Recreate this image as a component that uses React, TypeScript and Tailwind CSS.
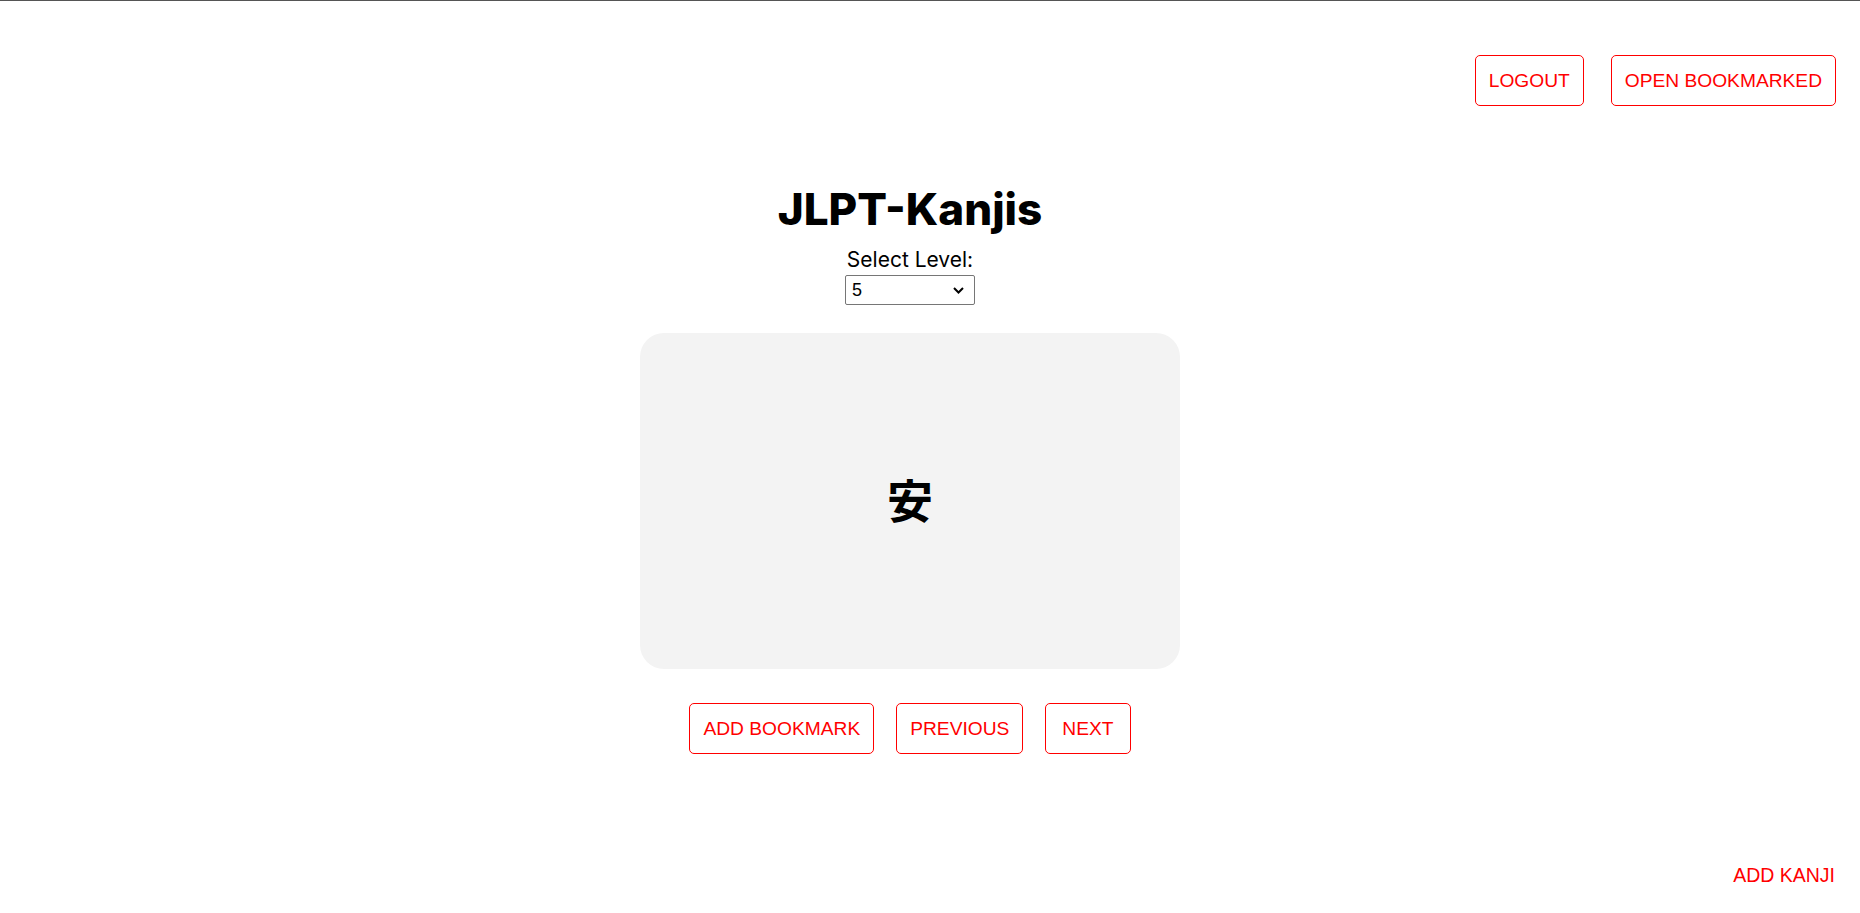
import React from "react";

const btn =
  "h-[51px] px-[13px] pt-[2px] flex items-center border border-[#ff0000] rounded-[5px] text-[#ff0000] text-[19.2px] bg-white font-['Liberation_Sans',Arial,sans-serif]";

export default function App() {
  return (
    <div className="min-h-[913px] bg-white border-t border-[#555555] flex flex-col font-['Liberation_Sans',Arial,sans-serif]">
      <div className="flex justify-end gap-[27px] pr-[24px] pt-[54px]">
        <button className={btn}>LOGOUT</button>
        <button className={btn}>OPEN BOOKMARKED</button>
      </div>

      <div className="flex flex-col items-center mr-[40px]">
        <h1 className="mt-[75px] text-[44px] leading-[56px] font-extrabold text-black font-['Inter',sans-serif]">
          JLPT-Kanjis
        </h1>
        <label className="mt-[11px] text-[21px] leading-[24px] text-black font-['Inter',sans-serif]">
          Select Level:
        </label>
        <div className="relative w-[130px] h-[30px] mt-[3px]">
          <select className="appearance-none w-full h-full border border-[#767676] rounded-[2px] pl-[6px] text-[18px] text-black bg-white font-['Liberation_Sans',Arial,sans-serif]">
            <option>5</option>
            <option>4</option>
            <option>3</option>
            <option>2</option>
            <option>1</option>
          </select>
          <svg
            className="absolute right-[11px] top-[12px] pointer-events-none"
            width="11"
            height="7"
            viewBox="0 0 11 7"
          >
            <path d="M1 1 L5.5 5.5 L10 1" fill="none" stroke="#000" strokeWidth="2" />
          </svg>
        </div>

        <div className="mt-[28px] w-[540px] h-[336px] rounded-[24px] bg-[#f3f3f3] flex items-center justify-center pb-[7px]">
          <span className="text-[46px] font-bold text-black font-['Noto_Sans_CJK_JP','Noto_Sans_CJK_SC',sans-serif] leading-none">
            安
          </span>
        </div>

        <div className="mt-[34px] flex gap-[22px]">
          <button className={btn}>ADD BOOKMARK</button>
          <button className={btn}>PREVIOUS</button>
          <button className={`${btn} px-[16px]`}>NEXT</button>
        </div>
      </div>

      <div className="flex justify-end pr-[25px] mt-[107px]">
        <button className="text-[#ff0000] text-[19.5px] bg-white font-['Liberation_Sans',Arial,sans-serif]">
          ADD KANJI
        </button>
      </div>
    </div>
  );
}
